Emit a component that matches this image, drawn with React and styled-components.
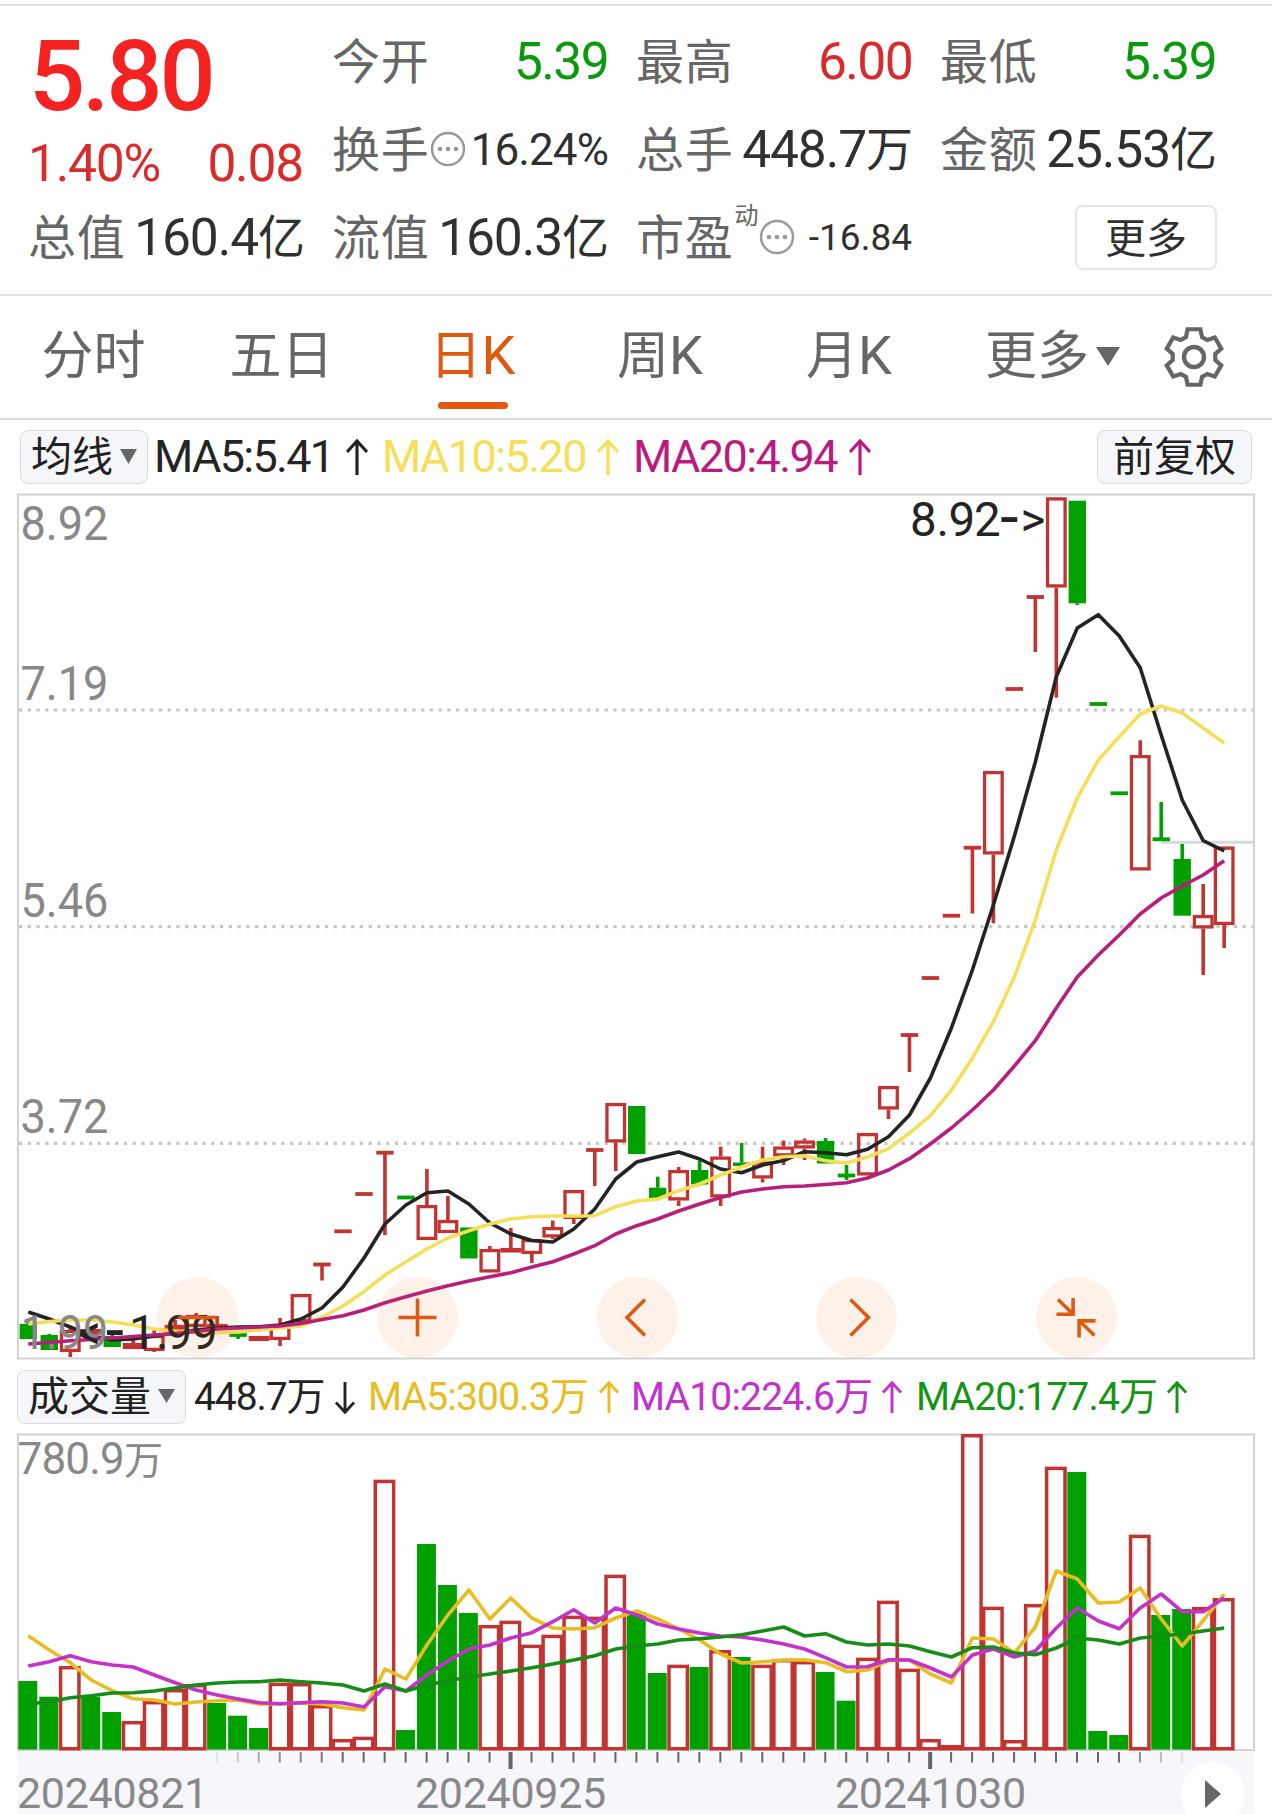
import React from 'react';
import styled, { createGlobalStyle } from 'styled-components';

const LATIN = `Roboto, "Noto Sans CJK SC", sans-serif`;
const CJK = `"Noto Sans CJK SC", Roboto, sans-serif`;
const RED = '#d92b2b';
const GREEN = '#0b9a0b';
const CANDLE_RED = '#c23431';
const CANDLE_GREEN = '#00a000';
const ORANGE = '#dd5a10';

const GlobalStyle = createGlobalStyle`
  html, body { margin: 0; padding: 0; background: #fff; }
  body { width: 1272px; height: 1814px; overflow: hidden; font-family: ${CJK}; }
  * { box-sizing: border-box; }
`;

const Page = styled.main`
  width: 1272px;
  height: 1814px;
  padding-top: 4px;
  display: flex;
  flex-direction: column;
  overflow: hidden;
  background: #fff;
`;

/* ---------- quote header ---------- */
const Quote = styled.section`
  height: 292px;
  flex: none;
  padding: 11px 56px 0 29px;
  border-top: 2px solid #dfe2e2;
  border-bottom: 2px solid #dedede;
  display: grid;
  grid-template-columns: repeat(4, 274px);
  grid-template-rows: repeat(3, 88px);
  column-gap: 30px;
`;

const Headline = styled.div`
  grid-row: 1 / span 2;
  display: flex;
  flex-direction: column;
`;

const LastPrice = styled.div`
  font: 500 99px/100px ${LATIN};
  letter-spacing: -3.2px;
  color: #f52222;
  margin: 9px 0 0 0;
`;

const Change = styled.div`
  display: flex;
  justify-content: space-between;
  font: 400 51.5px/60px ${LATIN};
  letter-spacing: -1.2px;
  color: ${RED};
  margin: 8px 0 0 -1px;
`;

const Cell = styled.div`
  display: flex;
  align-items: center;
  justify-content: ${(p) => (p.$end ? 'flex-end' : 'space-between')};
  height: 88px;
  white-space: nowrap;
`;

const Label = styled.div`
  display: flex;
  align-items: center;
  font: 400 48px/70px ${CJK};
  color: #666;
  margin-left: -1px;
`;

const LabelText = styled.span`
  margin-bottom: 6px;
  letter-spacing: 0.8px;
`;

const Sup = styled.span`
  font-size: 24px;
  line-height: 30px;
  align-self: flex-start;
  margin: 0 0 0 1px;
`;

const Value = styled.div`
  display: flex;
  align-items: center;
  font: 400 ${(p) => p.$size || 51.5}px/70px ${LATIN};
  letter-spacing: ${(p) => (p.$ls === undefined ? -1.1 : p.$ls)}px;
  margin: 2px ${(p) => (p.$unit ? -2 : -1)}px 0 0;
  color: ${(p) => p.$color || '#303030'};
`;

const Unit = styled.span`
  font: 400 47px/70px ${CJK};
  letter-spacing: 0;
  margin-bottom: 8px;
`;

const MoreButton = styled.button`
  width: 142px;
  height: 65px;
  padding: 0 0 6px;
  margin-right: -2px;
  border: 2px solid #e3e5e6;
  border-radius: 8px;
  background: #fff;
  color: #303030;
  font: 400 41px/56px ${CJK};
`;

/* ---------- tabs ---------- */
const Tabs = styled.nav`
  height: 124px;
  flex: none;
  border-bottom: 2px solid #dcdcdc;
  display: grid;
  grid-template-columns: 187px 189px 193px 182px 196px 211px 114px;
`;

const Tab = styled.div`
  display: flex;
  flex-direction: column;
  align-items: center;
  padding-top: 21px;
  font: 400 52px/70px ${CJK};
  color: ${(p) => (p.$active ? ORANGE : '#666')};
  &::after {
    content: '';
    width: 70px;
    height: 7px;
    border-radius: 4px;
    margin-top: 15px;
    background: ${(p) => (p.$active ? '#e8570e' : 'transparent')};
  }
`;

const TabText = styled.span`
  display: flex;
  align-items: center;
  height: 70px;
  gap: ${(p) => p.$gap || 0}px;
  svg { margin-top: 9px; }
`;

const Kay = styled.span`
  font-family: ${LATIN};
  font-size: 54px;
  margin-top: 4px;
  margin-bottom: -4px;
`;

const GearTab = styled.div`
  display: flex;
  align-items: center;
  padding: 0 0 0 3px;
`;

/* ---------- indicator rows ---------- */
const Indicators = styled.div`
  height: ${(p) => p.$h}px;
  flex: none;
  display: flex;
  align-items: flex-start;
  padding: ${(p) => p.$pad};
`;

const Pill = styled.button`
  width: ${(p) => p.$w}px;
  height: 54px;
  flex: none;
  display: flex;
  align-items: center;
  justify-content: center;
  gap: 7px;
  padding: 0 0 8px;
  border: 1.5px solid #d9dbe0;
  border-radius: 8px;
  background: #f5f6f9;
  color: #222;
  font: 400 41px/50px ${CJK};
  margin-left: ${(p) => (p.$push ? 'auto' : 0)};
  svg { margin-top: 6px; }
`;

const Legend = styled.div`
  display: flex;
  align-items: center;
  justify-content: space-between;
  width: ${(p) => p.$w}px;
  height: 54px;
  margin-left: ${(p) => p.$ml}px;
  white-space: nowrap;
  color: ${(p) => p.$color};
  font: 400 ${(p) => p.$size}px/54px ${LATIN};
  letter-spacing: ${(p) => p.$ls}px;
`;

/* ---------- charts ---------- */
const ChartBox = styled.div`
  position: relative;
  flex: none;
  width: 1272px;
  height: ${(p) => p.$h}px;
  svg { display: block; }
`;

const Controls = styled.div`
  position: absolute;
  left: 157px;
  top: 787px;
  width: 960px;
  display: flex;
  justify-content: space-between;
`;

const RoundButton = styled.button`
  width: 81px;
  height: 81px;
  padding: 0;
  border: 0;
  border-radius: 50%;
  background: rgba(240, 92, 14, 0.087);
`;

const Axis = styled.footer`
  flex: none;
  height: 63px;
  margin: 0 17px;
  background: #f7f7fb;
  overflow: hidden;
  svg { display: block; }
`;

const Dates = styled.div`
  display: grid;
  grid-template-columns: 398px 420px 1fr 74px;
  height: 43px;
  font: 400 43px/40px ${LATIN};
  letter-spacing: -0.3px;
  color: #888;
`;

const DateText = styled.span`
  display: block;
  height: 40px;
  margin-top: 2px;
  line-height: 40px;
`;

const PlayButton = styled.button`
  width: 64px;
  height: 64px;
  margin-top: -9px;
  padding: 0;
  border: 0;
  border-radius: 50%;
  background: #fff;
`;

/* ---------- small drawings ---------- */
const Dots = () => (
  <svg width="36" height="36" viewBox="0 0 36 36">
    <circle cx="18" cy="18" r="16" fill="none" stroke="#9a9a9a" strokeWidth="2.5" />
    {[10, 18, 26].map((x) => <circle key={x} cx={x} cy="18" r="2.3" fill="#999" />)}
  </svg>
);

const Caret = ({ w, h }) => (
  <svg width={w} height={h} viewBox="0 0 10 10" preserveAspectRatio="none">
    <path d="M0 0H10L5 10Z" fill="#666" />
  </svg>
);

const Arrow = ({ down, w = 22, h = 37 }) => (
  <svg width={w} height={h} viewBox="0 0 22 37" preserveAspectRatio="none">
    <path
      d="M11 36V2M1 13L11 2L21 13"
      transform={down ? 'rotate(180 11 18.5)' : undefined}
      fill="none" stroke="currentColor" strokeWidth="3.2"
    />
  </svg>
);

const polar = (r, deg) => {
  const a = (deg * Math.PI) / 180;
  return `${(r * Math.sin(a)).toFixed(2)},${(-r * Math.cos(a)).toFixed(2)}`;
};
const gearPoints = [0, 60, 120, 180, 240, 300]
  .flatMap((a) => [polar(21.5, a - 22), polar(28.5, a - 13), polar(28.5, a + 13), polar(21.5, a + 22)])
  .join(' ');

const Gear = () => (
  <svg width="66" height="66" viewBox="-33 -33 66 66">
    <polygon points={gearPoints} fill="none" stroke="#666" strokeWidth="4.2" />
    <circle r="10" fill="none" stroke="#666" strokeWidth="4.4" />
  </svg>
);

const controlPaths = {
  缩小: 'M-19 0H19',
  放大: 'M-19 0H19M0 -19V19',
  左移: 'M7.5 -18L-10.5 0L7.5 18',
  右移: 'M-6 -18L12 0L-6 18',
  收起: 'M-18.500 -18L-4 -4M-20 -3.200H-3.400V-19.500M19 3.400H2.600V20M18 18L3 3.500',
};

/* ---------- data ---------- */
const X0 = 28.3;
const STEP = 20.98;
const cx = (i) => X0 + STEP * i;

// [colour, high, bodyTop, bodyBottom, low]; equal body values draw a dash
const candles = [
  ['g', 1319, 1324, 1339, 1339], ['g', 1334, 1335, 1350, 1350], ['r', 1328, 1330, 1352, 1357],
  ['r', 1329, 1329, 1335, 1335], ['g', 1334, 1336, 1347, 1347], ['r', 1335, 1343, 1349, 1349],
  ['r', 1328, 1335, 1351, 1352], ['r', 1320, 1325, 1331, 1331], ['r', 1313, 1315, 1327, 1327],
  ['r', 1316, 1324, 1328, 1328], ['g', 1335, 1335, 1335, 1339], ['r', 1336, 1336, 1341, 1341],
  ['r', 1318, 1325, 1340, 1346], ['r', 1294, 1294, 1322, 1322], ['r', 1264.5, 1264.5, 1264.5, 1280.5],
  ['r', 1231.3, 1231.3, 1231.3, 1231.3], ['r', 1194, 1194, 1194, 1194], ['r', 1152.7, 1152.7, 1152.7, 1235],
  ['g', 1197.5, 1197.5, 1197.5, 1197.5], ['r', 1169, 1205, 1240, 1240], ['r', 1196, 1220, 1233, 1233],
  ['g', 1227.5, 1227.5, 1258.5, 1258.5], ['r', 1246, 1249, 1272.5, 1272.5], ['r', 1228, 1248, 1252.5, 1252.5],
  ['r', 1239, 1239, 1254, 1263], ['r', 1220.5, 1227, 1237.5, 1239], ['r', 1190, 1190, 1219, 1224],
  ['r', 1150, 1150, 1150, 1186], ['r', 1103, 1103, 1142.5, 1171], ['g', 1106, 1106, 1154, 1154],
  ['g', 1176.7, 1187.7, 1198, 1198], ['r', 1167, 1170, 1200.5, 1206], ['g', 1160.5, 1170, 1184.5, 1186],
  ['r', 1146.7, 1156.5, 1197.5, 1206], ['g', 1143, 1162.5, 1166, 1166], ['r', 1146.7, 1161.5, 1178.5, 1182.5],
  ['r', 1140.5, 1146.5, 1156.5, 1165], ['r', 1138.5, 1140.5, 1148.5, 1160], ['g', 1138, 1141, 1163.5, 1163.5],
  ['g', 1165, 1175.5, 1175.5, 1180], ['r', 1133, 1133, 1175.5, 1175.5], ['r', 1086, 1086, 1109.5, 1119],
  ['r', 1035, 1035, 1035, 1072], ['r', 978, 978, 978, 978], ['r', 915.7, 915.7, 915.7, 915.7],
  ['r', 847.7, 847.7, 847.7, 913.5], ['r', 771, 771, 854.5, 923.3], ['r', 689, 689, 689, 689],
  ['r', 597, 597, 597, 652], ['r', 497.3, 497.3, 587.5, 697.7], ['g', 500.7, 500.7, 603.3, 605],
  ['g', 704, 704, 704, 704], ['g', 793.3, 793.3, 793.3, 793.3], ['r', 740.3, 755, 870.5, 870.5],
  ['g', 802, 839.3, 839.3, 839.3], ['g', 844, 859, 915.7, 915.7], ['r', 884, 915, 928.5, 975],
  ['r', 846.5, 846.5, 925, 948],
];

const ma5 = [1312, 1319, 1327, 1336, 1340, 1339, 1336, 1333, 1330, 1328, 1327, 1326.7, 1325, 1319, 1308, 1287, 1258, 1224, 1205, 1192.7, 1191, 1204, 1223, 1234, 1240.5, 1242, 1229, 1209, 1179, 1162, 1156.7, 1152, 1159, 1169, 1172.7, 1165, 1160.5, 1151.7, 1152.7, 1154.7, 1149.3, 1136.7, 1115, 1078, 1028, 970, 905, 836, 762, 676.7, 628, 614.7, 636, 667.7, 735, 800, 840.7, 851];
const ma10 = [1324, 1321.5, 1320, 1320, 1322, 1325, 1329, 1331, 1332, 1332.7, 1332, 1330, 1328, 1326, 1317, 1306, 1291.7, 1275, 1261.7, 1249, 1238, 1230.7, 1224, 1219, 1216.7, 1216, 1216, 1215.7, 1206.7, 1201, 1199, 1190.7, 1184, 1175, 1167, 1160, 1156.7, 1155.7, 1160.7, 1163, 1157, 1148.7, 1133, 1115.7, 1090, 1058, 1021.7, 977, 920, 850, 798, 760, 736.7, 714, 706, 713, 728, 743];
const ma20 = [1344, 1342.5, 1340.7, 1339.5, 1338, 1336.5, 1335, 1333.5, 1331.5, 1329, 1328, 1327, 1326, 1323.5, 1319.5, 1315.7, 1310, 1302.7, 1296.7, 1291, 1285.7, 1281, 1276.7, 1272.7, 1267, 1261.7, 1254, 1245.7, 1234, 1225.7, 1219, 1211, 1204, 1197.5, 1192, 1189, 1186.7, 1186, 1184.5, 1182.7, 1178, 1170, 1158.7, 1144, 1128, 1110, 1090, 1066, 1040.7, 1008, 977, 955, 935, 914, 898, 886, 875, 860.7];

const volumeTops = [1681, 1696.7, 1666, 1697, 1712, 1721, 1701, 1689, 1684, 1703, 1715.7, 1728, 1682.7, 1683, 1705, 1739, 1736.7, 1479.7, 1730, 1544, 1585, 1613, 1625, 1620.7, 1644.7, 1634.7, 1615.7, 1616.7, 1574.7, 1612, 1673, 1664.7, 1667, 1650, 1657, 1664.7, 1659, 1661, 1672, 1700.7, 1657.7, 1600.7, 1668.7, 1739, 1745, 1434, 1606.7, 1740, 1604, 1466.7, 1472, 1731, 1735, 1534.7, 1615, 1609, 1607, 1598];
const volumeGreen = new Set([0, 1, 3, 4, 9, 10, 11, 18, 19, 20, 21, 29, 30, 32, 34, 38, 39, 50, 51, 52, 54, 55]);
const vma5 = [1635.7, 1650, 1662.7, 1680, 1690.7, 1698.7, 1700, 1704, 1702, 1700.7, 1700, 1704, 1704, 1703, 1704, 1707.7, 1710, 1669, 1679, 1645, 1615, 1590, 1619, 1598, 1618, 1628, 1629, 1627.7, 1618, 1611, 1619, 1629, 1640, 1654, 1663, 1661.7, 1660, 1659.7, 1662.7, 1671.7, 1670, 1660.7, 1660, 1674, 1683, 1638, 1639, 1653, 1627, 1571, 1579, 1603, 1602, 1588, 1619, 1646, 1620.7, 1594];
const vma10 = [1666, 1661.7, 1655.7, 1661.7, 1665, 1667, 1675, 1682.7, 1690, 1695, 1699, 1702.7, 1703.7, 1702.7, 1701.7, 1703, 1707, 1686.7, 1691, 1675, 1661, 1649, 1645, 1638, 1632.7, 1621.7, 1609.7, 1623, 1608, 1615, 1624, 1629, 1633, 1636, 1637, 1640, 1644, 1649, 1657.7, 1667, 1666.7, 1659.7, 1660, 1668, 1677, 1655, 1649, 1657, 1651, 1628, 1608, 1621, 1628.7, 1608, 1594, 1611.7, 1611.7, 1597.7];
const vma20 = [1704, 1701.7, 1697.7, 1695.7, 1693, 1692.7, 1691, 1688, 1685, 1683, 1682, 1681.7, 1680, 1681.7, 1683, 1685, 1691, 1684, 1691, 1685, 1680.7, 1677, 1674, 1671, 1667.7, 1664, 1660, 1655.7, 1649, 1646, 1644, 1640, 1638.7, 1637, 1634.7, 1631, 1627, 1636, 1633.7, 1642, 1645, 1644, 1646, 1651.7, 1657, 1647.7, 1647, 1653, 1654.7, 1648, 1638, 1640, 1644, 1638, 1636, 1634, 1631, 1628];

const line = (ys) => ys.map((y, i) => `${cx(i).toFixed(1)},${y}`).join(' ');

const Line = ({ ys, color, w = 3.6 }) => (
  <polyline points={line(ys)} fill="none" stroke={color} strokeWidth={w} strokeLinejoin="round" />
);

const Candle = ({ i, data: [c, high, top, bottom, low] }) => {
  const x = cx(i);
  const color = c === 'r' ? CANDLE_RED : CANDLE_GREEN;
  const dash = top === bottom;
  return (
    <g stroke={color} strokeWidth="3.6" fill="none">
      {high < top && <path d={`M${x} ${high}V${top}`} />}
      {low > bottom && <path d={`M${x} ${bottom}V${low}`} />}
      {dash && <path d={`M${x - 8.700} ${top}H${x + 8.700}`} strokeWidth="3.8" />}
      {!dash && c === 'r' && (
        <rect x={x - 8.8} y={top + 1.6} width="17.6" height={Math.max(bottom - top - 3.2, 0.5)} strokeWidth="3.3" />
      )}
      {!dash && c === 'g' && (
        <rect x={x - 8.7} y={top} width="17.4" height={bottom - top} fill={color} stroke="none" />
      )}
    </g>
  );
};

const priceLabels = [['8.92', 540], ['7.19', 700], ['5.46', 917], ['3.72', 1133], ['1.99', 1348.5]];
const DASH_FONT = '"DejaVu Sans", sans-serif';

const PriceChart = () => (
  <svg width="1272" height="876" viewBox="0 490 1272 876" fontFamily={LATIN} fontSize="47.5">
    <rect x="18" y="494.500" width="1236" height="864" fill="none" stroke="#d3d3d3" strokeWidth="2" />
    {[710, 926.7, 1143.3].map((y) => (
      <path key={y} d={`M19 ${y}H1253`} stroke="#c6c6c6" strokeWidth="3.2" strokeDasharray="3.2 5.54" />
    ))}
    <path d="M1161 842.300H1253" stroke="#d5dade" strokeWidth="3" />
    {candles.map((d, i) => <Candle key={i} i={i} data={d} />)}
    <Line ys={ma5} color="#242424" />
    <Line ys={ma10} color="#f5df5a" />
    <Line ys={ma20} color="#b81f7c" />
    <g fill="#242424">
      <text y="536" x="910 936.5 948.5 974">
        8.92<tspan x="998.500" fontFamily={DASH_FONT} fontSize="60">-</tspan><tspan x="1020.500">&gt;</tspan>
      </text>
      <text y="1348.500">
        <tspan x="77">&lt;</tspan><tspan x="104" fontFamily={DASH_FONT} fontSize="60">-</tspan><tspan x="129 156 165.5 191">1.99</tspan>
      </text>
    </g>
    <g fill="#888">
      {priceLabels.map(([t, y]) => (
        <text key={t} x="20.500" y={y} textLength="88" lengthAdjust="spacingAndGlyphs">{t}</text>
      ))}
    </g>
  </svg>
);

const BASE = 1749.5;
const VolumeBar = ({ i, top }) => {
  const x = cx(i) - 0.5;
  return volumeGreen.has(i) ? (
    <rect x={x - 9.5} y={top} width="19" height={BASE - top} fill={CANDLE_GREEN} />
  ) : (
    <rect x={x - 9.2} y={top + 1.7} width="18.4" height={BASE - top - 2.5} fill="none" stroke={CANDLE_RED} strokeWidth="3.5" />
  );
};

const VolumeChart = () => (
  <svg width="1272" height="321" viewBox="0 1430 1272 321" fontFamily={LATIN} fontSize="44">
    <rect x="18" y="1434.500" width="1236" height="315.500" fill="none" stroke="#d3d3d3" strokeWidth="2" />
    <text x="17.500" y="1474" fill="#888" letterSpacing="-0.800">780.9<tspan fontSize="39">万</tspan></text>
    {volumeTops.map((t, i) => <VolumeBar key={i} i={i} top={t} />)}
    <Line ys={vma5} color="#e9bd22" />
    <Line ys={vma10} color="#c431cb" />
    <Line ys={vma20} color="#178c17" />
  </svg>
);

const tickOpacity = (i) => ({ 9: 0.12, 10: 0.3, 11: 0.5, 12: 0.7, 13: 0.75, 14: 0.85, 53: 0.7, 54: 0.4, 55: 0.15 }[i] || 1);

const Ticks = () => (
  <svg width="1238" height="20" viewBox="17 1751 1238 20">
    {Array.from({ length: 47 }, (_, k) => k + 9).map((i) => {
      const major = i === 23 || i === 43;
      return (
        <path key={i} d={`M${cx(i) - 0.300} 1752V${major ? 1769 : 1762.500}`} stroke="#666"
          strokeWidth={major ? 4 : 2} opacity={tickOpacity(i)} />
      );
    })}
  </svg>
);

/* ---------- page ---------- */
const Stat = ({ label, extra, num, unit, ...rest }) => (
  <Cell>
    <Label><LabelText>{label}</LabelText>{extra}</Label>
    <Value $unit={unit} {...rest}><span>{num}</span>{unit && <Unit>{unit}</Unit>}</Value>
  </Cell>
);

export default function App() {
  return (
    <>
      <GlobalStyle />
      <Page>
        <Quote>
          <Headline>
            <LastPrice>5.80</LastPrice>
            <Change><span>1.40%</span><span>0.08</span></Change>
          </Headline>
          <Stat label="今开" num="5.39" $color={GREEN} $ls={-1.6} />
          <Stat label="最高" num="6.00" $color={RED} $ls={-1.6} />
          <Stat label="最低" num="5.39" $color={GREEN} $ls={-1.6} />
          <Stat label="换手" extra={<Dots />} num="16.24%" $size={44} $ls={-0.9} />
          <Stat label="总手" num="448.7" unit="万" />
          <Stat label="金额" num="25.53" unit="亿" />
          <Stat label="总值" num="160.4" unit="亿" />
          <Stat label="流值" num="160.3" unit="亿" />
          <Stat label="市盈" extra={<><Sup>动</Sup><Dots /></>} num="-16.84" $size={37} $ls={0} />
          <Cell $end><MoreButton>更多</MoreButton></Cell>
        </Quote>

        <Tabs>
          <Tab>分时</Tab>
          <Tab>五日</Tab>
          <Tab $active><TabText>日<Kay>K</Kay></TabText></Tab>
          <Tab><TabText>周<Kay>K</Kay></TabText></Tab>
          <Tab><TabText>月<Kay>K</Kay></TabText></Tab>
          <Tab><TabText $gap={7}>更多<Caret w={24} h={19} /></TabText></Tab>
          <GearTab><Gear /></GearTab>
        </Tabs>

        <Indicators $h={70} $pad="10px 20px 0">
          <Pill $w={128}>均线<Caret w={17} h={15} /></Pill>
          <Legend $ml={6} $w={214} $size={45} $ls={-1.7} $color="#242424">MA5:5.41<Arrow /></Legend>
          <Legend $ml={14} $w={237} $size={45} $ls={-1.6} $color="#f5df5a">MA10:5.20<Arrow /></Legend>
          <Legend $ml={14} $w={238} $size={45} $ls={-1.6} $color="#bd1a80">MA20:4.94<Arrow /></Legend>
          <Pill $w={155} $push>前复权</Pill>
        </Indicators>

        <ChartBox $h={876}>
          <PriceChart />
          <Controls>
            {Object.entries(controlPaths).map(([name, d]) => (
              <RoundButton key={name} aria-label={name}>
                <svg width="81" height="81" viewBox="-40.5 -40.5 81 81">
                  <path d={d} fill="none" stroke={ORANGE} strokeWidth="3.6" />
                </svg>
              </RoundButton>
            ))}
          </Controls>
        </ChartBox>

        <Indicators $h={64} $pad="4px 17px 0">
          <Pill $w={169}>成交量<Caret w={17} h={14} /></Pill>
          <Legend $ml={8} $w={161} $size={39} $ls={-1.1} $color="#242424">448.7万<Arrow down w={20} h={33} /></Legend>
          <Legend $ml={13} $w={251} $size={39} $ls={-0.8} $color="#e9bd22">MA5:300.3万<Arrow w={20} h={33} /></Legend>
          <Legend $ml={12} $w={271} $size={39} $ls={-0.8} $color="#c431cb">MA10:224.6万<Arrow w={20} h={33} /></Legend>
          <Legend $ml={14} $w={271} $size={39} $ls={-0.8} $color="#149414">MA20:177.4万<Arrow w={20} h={33} /></Legend>
        </Indicators>

        <ChartBox $h={321}><VolumeChart /></ChartBox>

        <Axis>
          <Ticks />
          <Dates>
            <DateText>20240821</DateText>
            <DateText>20240925</DateText>
            <DateText>20241030</DateText>
            <PlayButton aria-label="播放">
              <svg width="64" height="64" viewBox="0 0 64 64"><path d="M24 18V46L40 32Z" fill="#666" /></svg>
            </PlayButton>
          </Dates>
        </Axis>
      </Page>
    </>
  );
}
